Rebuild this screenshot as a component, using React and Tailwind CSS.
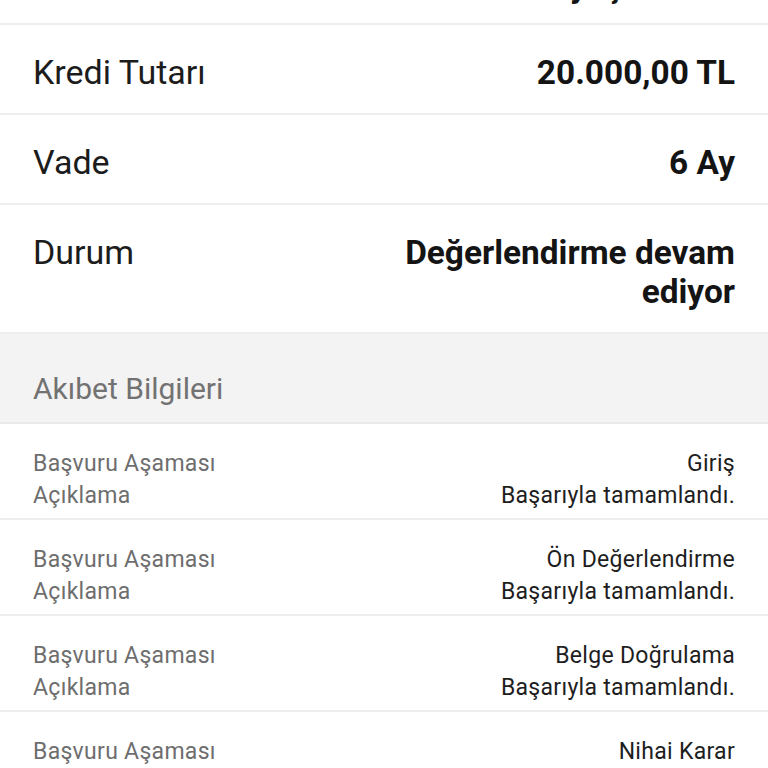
import React from "react";

function MainRow({ label, value, first }) {
  return (
    <div
      className={
        "flex items-start justify-between gap-6 border-b-2 border-[#eeeeee] bg-white pl-[33px] pr-[33px] pt-[28px] " +
        (first ? "-mt-[62px] pb-[18px]" : "pb-[21px]")
      }
    >
      <div className="shrink-0 text-[34px] leading-[39px] text-[#1c1c1c]">{label}</div>
      <div className="max-w-[350px] text-right text-[33.4px] font-bold leading-[39px] text-[#141414]">
        {value}
      </div>
    </div>
  );
}

function StageRow({ stage, desc }) {
  return (
    <div className="flex items-start justify-between border-b-2 border-[#eeeeee] bg-white pb-[6px] pl-[33px] pr-[33px] pt-[24px] text-[23px] leading-[32px] tracking-[0.3px]">
      <div className="text-[#6e6e6e]">
        <div>Başvuru Aşaması</div>
        <div>Açıklama</div>
      </div>
      <div className="text-right text-[#1e1e1e]">
        <div>{stage}</div>
        <div>{desc}</div>
      </div>
    </div>
  );
}

export default function App() {
  return (
    <div className="h-[768px] w-[768px] overflow-hidden bg-white font-['Roboto',sans-serif]">
      <MainRow first label="Kredi Türü" value="İhtiyaç Kredisi" />
      <MainRow label="Kredi Tutarı" value="20.000,00 TL" />
      <MainRow label="Vade" value="6 Ay" />
      <MainRow label="Durum" value="Değerlendirme devam ediyor" />
      <div className="border-b-2 border-[#e9e9e9] bg-[#f3f3f3] pb-[15px] pl-[33px] pt-[37px] text-[30px] leading-[36px] text-[#727272]">
        Akıbet Bilgileri
      </div>
      <StageRow stage="Giriş" desc="Başarıyla tamamlandı." />
      <StageRow stage="Ön Değerlendirme" desc="Başarıyla tamamlandı." />
      <StageRow stage="Belge Doğrulama" desc="Başarıyla tamamlandı." />
      <StageRow stage="Nihai Karar" desc="Değerlendiriliyor." />
    </div>
  );
}
